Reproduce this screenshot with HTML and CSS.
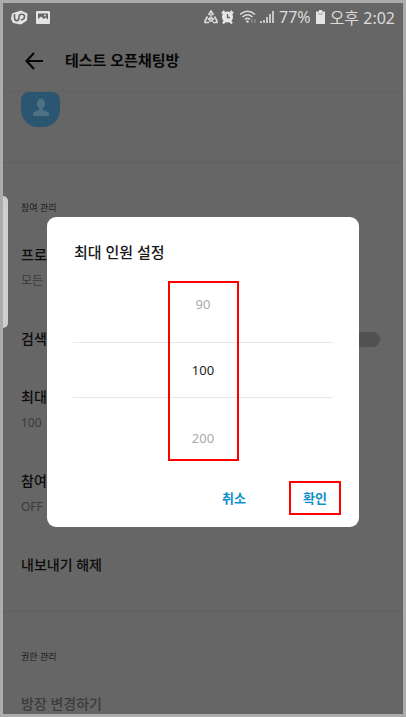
FILE: index.html
```html
<!DOCTYPE html>
<html lang="ko">
  <head>
    <meta charset="UTF-8" />
    <meta name="viewport" content="width=device-width, initial-scale=1.0" />
    <title>테스트 오픈채팅방</title>
    <link rel="stylesheet" href="styles.css">
  </head>
  <body>
    <div class="screen">
      <div class="status-bar">
        <svg width="17" height="15" viewBox="0 0 17 15">
          <path d="M1 3.500 10 .5l6.500 3-.5 7-6 4L2 13 0 9z" fill="#e4e4e4" />
          <path d="M3.500 4v4c0 3.500 4.500 3.500 4.500 0V6.500c0-3 5.500-3 5.500 0 0 2.500-2 3.500-3.500 3" fill="none" stroke="#666" stroke-width="1.600" />
        </svg>
        <svg class="picture-icon" width="14" height="13" viewBox="0 0 14 13">
          <rect width="14" height="13" rx="1" fill="#e4e4e4" />
          <path d="M2 2.500h10v6L9.500 6.500 8 8 5 5.500 2 8z" fill="#666" />
          <circle cx="9" cy="4.500" r="1" fill="#e4e4e4" />
        </svg>
        <div class="status-right">
          <svg width="14" height="14" viewBox="0 0 14 14" fill="none" stroke="#dcdcdc" stroke-width="1.600">
            <path d="M4.500 5 7 1 9.500 5M3.500 6.500 1 11v1.500h4M10.500 6.500 13 11v1.500H9M7 4v2.500M4 9.500l2-1.500v4M10 9.500 8 8v4" />
          </svg>
          <svg width="13" height="14" viewBox="0 0 13 14">
            <circle cx="6.500" cy="7" r="5.500" fill="#e8e8e8" />
            <path d="M1 3.500 3.500 1M12 3.500 9.500 1M2 13.500 4 11M11 13.500 9 11" stroke="#e8e8e8" stroke-width="2.200" />
            <path d="M6.500 4v3.500H9" fill="none" stroke="#666" stroke-width="1.400" />
          </svg>
          <svg class="wifi-icon" width="17" height="14" viewBox="0 0 17 14" fill="none" stroke="#dcdcdc" stroke-width="1.500">
            <path d="M0 4.500q7.500-6.500 15 0M2.500 7q5-4.500 10 0M5 9.500q2.500-2.500 5 0" />
            <circle cx="7.500" cy="11.500" r="1.200" fill="#dcdcdc" stroke="none" />
            <path d="M12 9v4M15 9v4" stroke="#8a8a8a" />
          </svg>
          <svg width="14" height="14" viewBox="0 0 14 14" fill="none" stroke="#dcdcdc" stroke-width="1.600">
            <path d="M1 13v-2M4 13v-3M7 13V7M10 13V4M13 13V1" />
          </svg>
          <span class="battery-text">77%</span>
          <svg class="battery-icon" width="9" height="14" viewBox="0 0 9 14">
            <path d="M3 0h3v1.500h3V14H0V1.500h3z" fill="#e4e4e4" />
            <path d="M2 4h5" stroke="#999" />
          </svg>
          <span>오후 2:02</span>
        </div>
      </div>

      <header class="app-bar">
        <button class="back" aria-label="뒤로">
          <svg width="18" height="18" viewBox="0 0 18 18" fill="none" stroke="#080808" stroke-width="2.200">
            <path d="M18 9H1.500M9 1 1.500 9 9 17" />
          </svg>
        </button>
        <h1>테스트 오픈채팅방</h1>
      </header>

      <main>
        <div class="profile">
          <div class="avatar">
            <svg width="16" height="19" viewBox="0 0 16 19" fill="#4e7184">
              <ellipse cx="8" cy="5.500" rx="4" ry="5" />
              <path d="M6 9h4v3l5 2q1 .5 1 4H0q0-3.500 1-4l5-2z" />
            </svg>
          </div>
        </div>

        <section>
          <h2>참여 관리</h2>
          <div class="row">
            <h3>프로필</h3>
            <p>모든 프로필</p>
          </div>
          <div class="row toggle-row">
            <label for="search">검색</label>
            <input type="checkbox" id="search" class="switch" />
          </div>
          <div class="row">
            <h3>최대</h3>
            <p>100</p>
          </div>
          <div class="row">
            <h3>참여</h3>
            <p>OFF</p>
          </div>
          <div class="row single">
            <h3>내보내기 해제</h3>
          </div>
        </section>

        <section>
          <h2>권한 관리</h2>
          <div class="row single disabled">
            <h3>방장 변경하기</h3>
          </div>
        </section>
      </main>

      <div class="edge-handle"></div>

      <div class="overlay">
        <div class="dialog" role="dialog" aria-labelledby="dialog-title">
          <h2 id="dialog-title">최대 인원 설정</h2>
          <div class="picker">
            <div class="option">90</div>
            <div class="option selected">100</div>
            <div class="option">200</div>
            <div class="marker"></div>
          </div>
          <div class="actions">
            <button>취소</button>
            <button class="confirm">확인</button>
          </div>
        </div>
      </div>
    </div>
  </body>
</html>
```
FILE: styles.css
```css
* {
  box-sizing: border-box;
}

body {
  margin: 0;
  font-family: "Noto Sans", "Noto Sans CJK KR", sans-serif;
  background: #acacac;
}

h1,
h2,
h3,
p {
  margin: 0;
}

button {
  border: none;
  background: none;
  padding: 0;
  font-family: inherit;
  cursor: pointer;
}

.screen {
  position: relative;
  height: 100vh;
  border: 3px solid #acacac;
  background: #666;
  overflow: hidden;
}

.status-bar {
  display: flex;
  align-items: center;
  height: 28px;
  padding: 0 8px;
  color: #dcdcdc;
  font-size: 16px;
}

.picture-icon {
  margin-left: 8px;
}

.status-right {
  display: flex;
  align-items: center;
  gap: 3px;
  margin-left: auto;
  white-space: nowrap;
}

.wifi-icon {
  margin-left: 3px;
}

.battery-text {
  margin-left: 2px;
}

.battery-icon {
  margin: 0 2px;
}

.app-bar {
  display: flex;
  align-items: center;
  gap: 22px;
  height: 60px;
  padding: 0 22px;
}

.back {
  display: flex;
}

.app-bar h1 {
  padding-bottom: 3px;
  font-size: 15px;
  font-weight: 700;
  color: #080808;
}

.profile {
  height: 72px;
  padding: 0 18px;
  border-top: 1px solid #616161;
  border-bottom: 1px solid #5f5f5f;
}

.avatar {
  display: flex;
  justify-content: center;
  width: 39px;
  height: 35px;
  padding-top: 6px;
  border-radius: 8px 8px 17px 17px;
  background: #2b5672;
}

section h2 {
  padding: 38px 18px 12px;
  font-size: 9px;
  line-height: 14px;
  font-weight: 400;
  color: #1c1c1c;
}

section + section {
  border-top: 1px solid #5f5f5f;
}

.row {
  margin: 0 18px;
  padding: 16px 0 17px;
  border-bottom: 1px solid #636363;
  white-space: nowrap;
}

.row h3,
.row label {
  font-size: 14px;
  line-height: 24px;
  font-weight: 500;
  color: #0c0c0c;
}

.row p {
  padding-top: 2px;
  font-size: 12px;
  line-height: 24px;
  color: #3a3a3a;
}

.toggle-row {
  display: flex;
  align-items: center;
  justify-content: space-between;
}

.switch {
  appearance: none;
  width: 28px;
  height: 15px;
  margin: 0 5px 0 0;
  border-radius: 8px;
  background: #515151;
}

.single {
  padding: 16px 0 34px;
  border-bottom: none;
}

.disabled h3 {
  color: #3c3c3c;
}

.edge-handle {
  position: absolute;
  top: 193px;
  left: 0;
  width: 5px;
  height: 132px;
  border-radius: 0 5px 5px 0;
  background: #cfcfcf;
}

.overlay {
  position: absolute;
  inset: 0;
  display: flex;
  align-items: center;
  padding: 26px 44px 0;
}

.dialog {
  flex: 1;
  padding: 23px 26px 12px;
  border-radius: 9px;
  background: #fff;
}

.dialog h2 {
  padding-left: 1px;
  font-size: 15px;
  line-height: 24px;
  font-weight: 500;
  color: #181818;
}

.picker {
  position: relative;
  padding: 18px 0;
  text-align: center;
}

.option {
  font-size: 13px;
  line-height: 24px;
  padding: 10px 0 26px;
  color: #aaa;
}

.option.selected {
  padding: 15px 0;
  border-top: 1px solid #e8e8e8;
  border-bottom: 1px solid #e8e8e8;
  color: #222;
}

.option.selected + .option {
  padding: 28px 0 13px;
}

/* red box around the picker column */
.marker {
  position: absolute;
  top: 17px;
  bottom: 20px;
  left: 50%;
  width: 71px;
  margin-left: -35px;
  border: 2px solid #f00;
}

.actions {
  display: flex;
  justify-content: flex-end;
  gap: 30px;
  margin-right: -8px;
}

.actions button {
  width: 50px;
  height: 34px;
  font-size: 13px;
  font-weight: 700;
  color: #0d8fcb;
}

.actions .confirm {
  width: 52px;
  border: 2px solid #f00;
}
```
